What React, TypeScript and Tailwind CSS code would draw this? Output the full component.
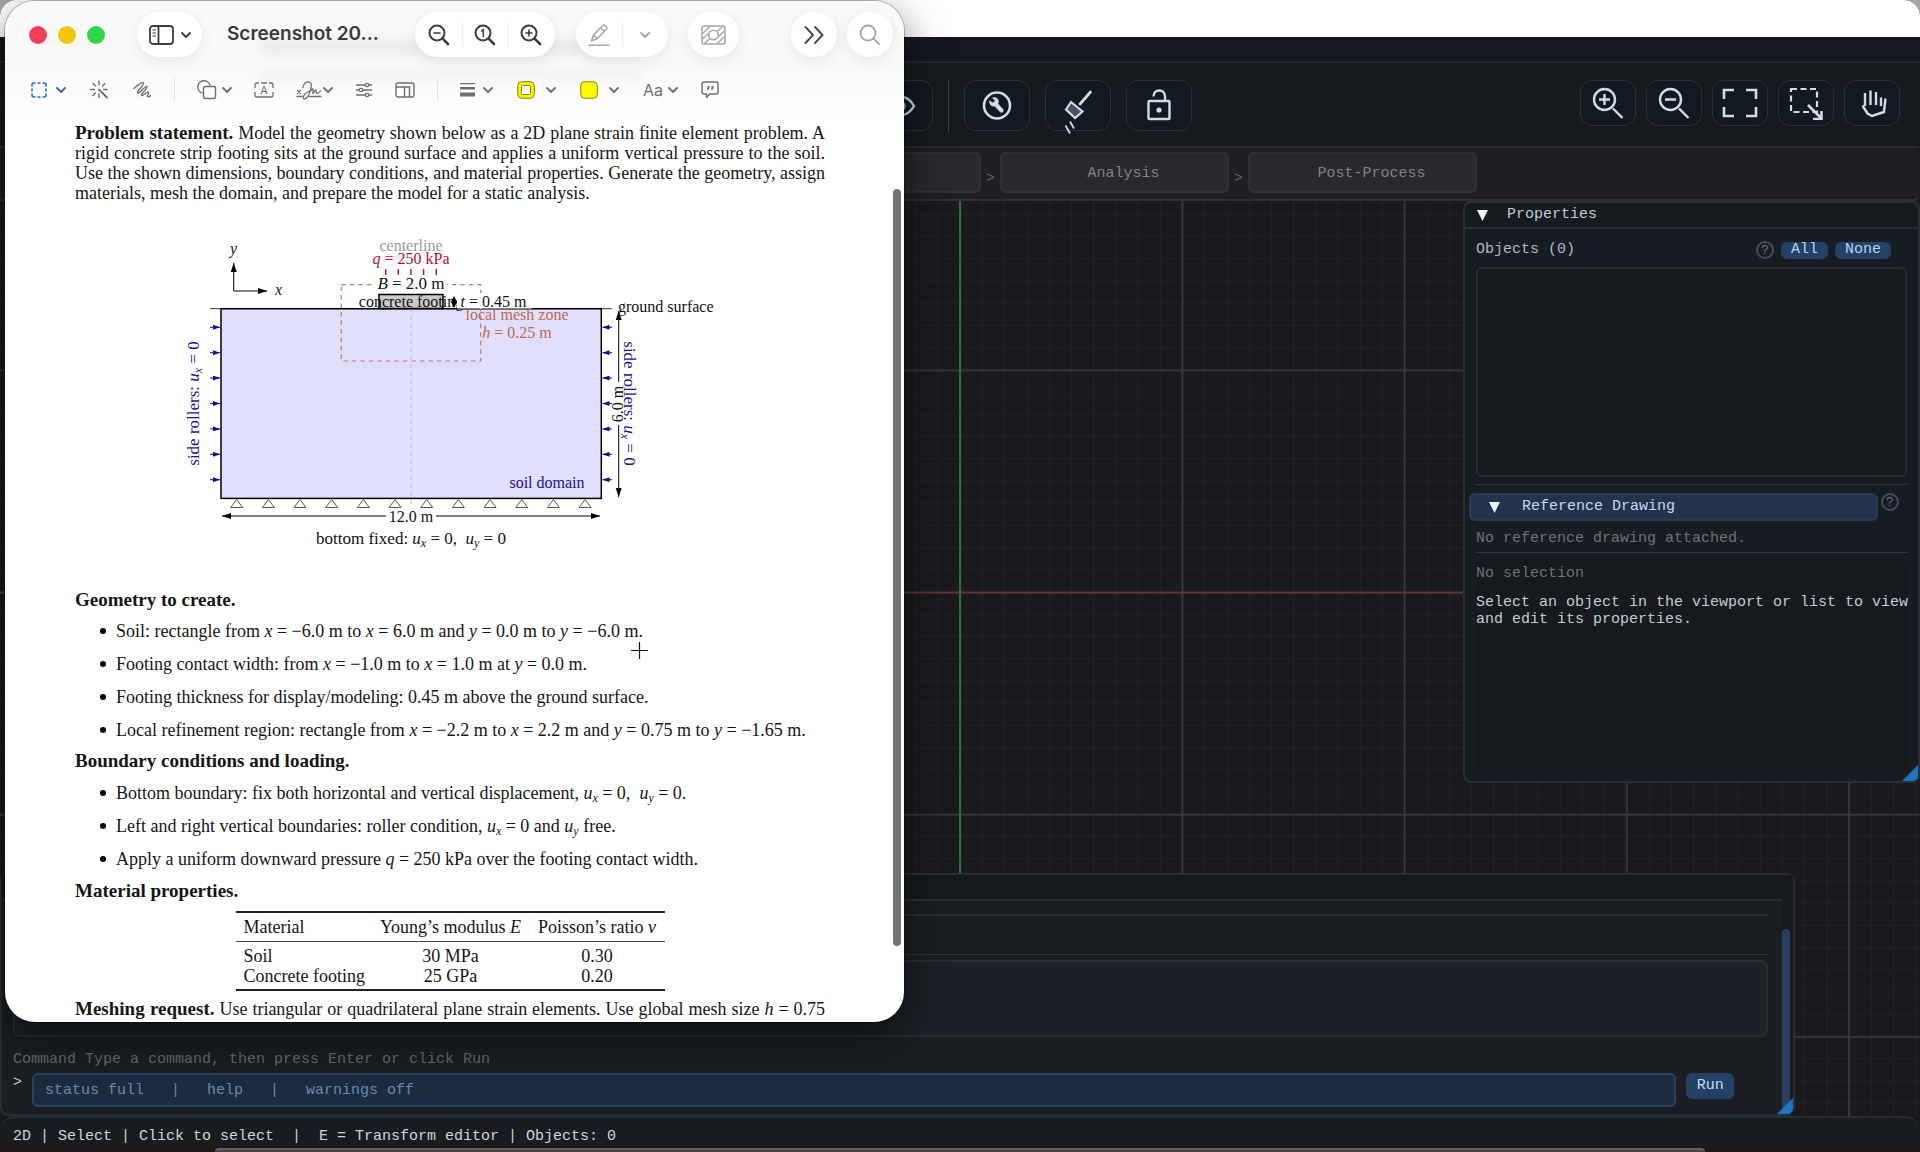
import type { ReactNode } from 'react';

const MONO = "font-['Liberation_Mono',monospace]";
const SERIF = "font-['Liberation_Serif',serif]";

const tabs = [
  { id: 'Mesh', label: '' },
  { id: 'Analysis', label: 'Analysis' },
  { id: 'Post-Process', label: 'Post-Process' },
];

/* ---------- dark application ---------- */

function ToolButton({ label, small, children }: { label: string; small?: boolean; children: ReactNode }) {
  return (
    <button
      type="button"
      aria-label={label}
      className={
        small
          ? 'flex h-[46px] w-14 items-center justify-center rounded-xl border border-[#2a3138] bg-[#131920] text-[#d3dbea]'
          : 'flex h-[51px] w-[66px] items-center justify-center rounded-xl border border-[#2a3138] bg-[#131920] text-[#d3dbea]'
      }
    >
      {children}
    </button>
  );
}

function Toolbar() {
  return (
    <div className="flex h-[85px] shrink-0 items-start justify-between border-b-2 border-[#252c33] bg-[#141a1e] pt-[17px] pr-5 pl-[867px]">
      <div className="flex items-start gap-[15px]">
        <ToolButton label="Visibility">
          <svg width="32" height="32" viewBox="0 0 32 32" fill="none" stroke="currentColor" strokeWidth="2.4">
            <path d="M2 16C6 9 11 6.500 16 6.500S26 9 30 16C26 23 21 25.500 16 25.500S6 23 2 16Z" />
            <circle cx="16" cy="16" r="4.500" fill="currentColor" />
          </svg>
        </ToolButton>
        <div className="h-[53px] w-px bg-[#3a4046]" />
        <ToolButton label="Settings">
          <svg width="32" height="32" viewBox="0 0 32 32" fill="none" stroke="currentColor">
            <ellipse cx="16" cy="15.500" rx="13" ry="13" strokeWidth="2.600" />
            <path d="M14 13.500L20.500 20.500" strokeWidth="4.200" strokeLinecap="round" />
            <path d="M11.500 7.800l3 3.200-2 2.400-3.800-2.600c-.6 3.600 1.800 6 5.400 5.200l3.200-3.200c.8-3.600-2-6.200-5.800-5Z" fill="currentColor" strokeWidth=".6" />
          </svg>
        </ToolButton>
        <ToolButton label="Clean">
          <svg className="overflow-visible" width="32" height="32" viewBox="0 0 32 32" fill="none" stroke="currentColor" strokeWidth="2">
            <path d="M28.500 2L18 14" strokeWidth="2.800" strokeLinecap="round" />
            <path d="M9 12L20.500 21.500L13 28L4 19.500Z" fill="#4b5263" strokeWidth="2.200" />
            <path d="M3.500 35.500l4.500 8M8 31.500l4 7" strokeWidth="1.800" />
          </svg>
        </ToolButton>
        <ToolButton label="Unlock">
          <svg className="mb-1" width="32" height="36" viewBox="0 0 32 36" fill="none" stroke="currentColor" strokeWidth="2.400">
            <rect x="5.500" y="15" width="21" height="18" rx="1" />
            <path d="M10.500 10.500C10.500 2.500 22 2.500 22 10.500V15" />
            <circle cx="16" cy="24" r="2.600" fill="currentColor" stroke="none" />
          </svg>
        </ToolButton>
      </div>
      <div className="flex gap-[10px]">
        <ToolButton small label="Zoom in">
          <svg width="32" height="32" viewBox="0 0 32 32" fill="none" stroke="currentColor" strokeWidth="2.400">
            <circle cx="12.500" cy="12.500" r="10.500" />
            <path d="M7 12.500h11M12.500 7v11M21 21.500L30.500 31" />
          </svg>
        </ToolButton>
        <ToolButton small label="Zoom out">
          <svg width="32" height="32" viewBox="0 0 32 32" fill="none" stroke="currentColor" strokeWidth="2.400">
            <circle cx="12.500" cy="12.500" r="10.500" />
            <path d="M7 12.500h11M21 21.500L30.500 31" />
          </svg>
        </ToolButton>
        <ToolButton small label="Fit view">
          <svg width="36" height="30" viewBox="0 0 36 30" fill="none" stroke="currentColor" strokeWidth="2.600">
            <path d="M2 11V2h10M24 2h10v9M34 19v9H24M12 28H2v-9" />
          </svg>
        </ToolButton>
        <ToolButton small label="Zoom to selection">
          <svg width="34" height="34" viewBox="0 0 34 34" fill="none" stroke="currentColor" strokeWidth="2.200">
            <rect x="2" y="3" width="26" height="23" strokeDasharray="6 3.500" />
            <path d="M19 19L32 32M32.500 25v8H24" strokeWidth="2.600" />
          </svg>
        </ToolButton>
        <ToolButton small label="Pan">
          <svg width="30" height="30" viewBox="0 0 30 30" fill="none" stroke="currentColor" strokeWidth="2.400">
            <path d="M8 18V5M13.500 17V2.500M19 17V4M24 18V9.500M5.500 17.500l5 8 4.500 2.500 12-4 1.500-13.500" />
          </svg>
        </ToolButton>
      </div>
    </div>
  );
}

function StageTabs() {
  return (
    <nav className="flex h-[53px] shrink-0 items-start rounded-r-md border-b-2 border-[#2a2f35] bg-[#1f1f23] pt-1 pl-[752px]">
      {tabs.map((tab, i) => (
        <div key={tab.id} className="flex items-start">
          {i > 0 && <span className="mt-[13px] w-[19px] text-center text-[15px] leading-7 text-[#5d6167]">&gt;</span>}
          <button
            type="button"
            aria-label={tab.id}
            className="h-[41px] w-[229px] rounded-md border-2 border-[#2d3238] bg-[#29282d] pt-[3px] pl-[18px] text-[15px] text-[#7f838a]"
          >
            {tab.label}
          </button>
        </div>
      ))}
    </nav>
  );
}

const CELL = 222.2;

function ViewportGrid() {
  return (
    <svg className="absolute inset-0 h-full w-full" aria-hidden="true">
      <defs>
        <pattern id="minor" x="959.7" y="390.6" width={CELL / 10} height={CELL / 10} patternUnits="userSpaceOnUse">
          <path d={`M.5 0V${CELL}M0 .5H${CELL}`} stroke="#212126" />
        </pattern>
        <pattern id="major" x="959.2" y="390.600" width={CELL} height={CELL} patternUnits="userSpaceOnUse">
          <path d={`M1 0V${CELL}M0 1H${CELL}`} stroke="#3c3c40" strokeWidth="1.500" />
        </pattern>
      </defs>
      <rect width="100%" height="100%" fill="#1a191d" />
      <rect width="100%" height="100%" fill="url(#minor)" />
      <rect width="100%" height="100%" fill="url(#major)" />
      <path d="M0 391.500H4000" stroke="#6d2f3b" strokeWidth="1.500" />
      <path d="M960 0V2000" stroke="#2b7036" strokeWidth="2" />
    </svg>
  );
}

function Triangle() {
  return (
    <svg width="11" height="11" viewBox="0 0 11 11" aria-hidden="true">
      <path d="M0 0H11L5.500 11Z" fill="#eef4fb" />
    </svg>
  );
}

function HelpMark() {
  return (
    <button
      type="button"
      className="flex h-[18px] w-[18px] items-center justify-center rounded-full border-2 border-[#454d5b] text-[13px] leading-none text-[#6d7889]"
    >
      ?
    </button>
  );
}

function ResizeCorner() {
  return (
    <svg className="absolute right-0 bottom-0" width="16" height="16" viewBox="0 0 16 16" aria-hidden="true">
      <path d="M16 0V10Q16 16 10 16H0Z" fill="#1f74c0" />
    </svg>
  );
}

function PropertiesPanel() {
  return (
    <section className="absolute top-0 right-0 flex h-[582px] w-[457px] flex-col rounded-lg border-2 border-[#262e36] bg-[#171c22] text-[15px] text-[#c3ccd4]">
      <header className="flex h-[26px] shrink-0 items-center gap-[19px] rounded-t-lg border-b-2 border-[#262e36] bg-[#141a1e] pt-px pl-3">
        <Triangle />
        <h2>Properties</h2>
      </header>
      <div className="flex flex-1 flex-col px-[11px] pt-3 pb-2">
        <div className="flex h-[18px] items-center pr-4">
          <span className="text-[#a9bac8]">Objects (0)</span>
          <div className="ml-auto flex items-center gap-[7px]">
            <HelpMark />
            <button type="button" className="h-[17px] w-[47px] rounded-md bg-[#234067] leading-4 text-[#b5d3f0]">
              All
            </button>
            <button type="button" className="h-[17px] w-14 rounded-md bg-[#234067] leading-4 text-[#b5d3f0]">
              None
            </button>
          </div>
        </div>
        <div className="mt-2 h-[210px] rounded-md border-2 border-[#272d33] bg-[#141a1d]" />
        <hr className="mt-[7px] border-[#33383e]" />
        <div className="-ml-[7px] mt-2 flex items-start gap-[3px]">
          <button
            type="button"
            className="flex h-7 w-[409px] items-center gap-[22px] rounded-md border-2 border-[#263c55] bg-[#22344d] pt-px pl-[18px] text-[#c5daed]"
          >
            <Triangle />
            Reference Drawing
          </button>
          <HelpMark />
        </div>
        <p className="mt-[9px] leading-[18px] text-[#6c7178]">No reference drawing attached.</p>
        <hr className="mt-1 border-[#33383e]" />
        <div className="mt-2 flex-1 bg-[#141a1d] pt-1">
          <p className="leading-[18px] text-[#6c7178]">No selection</p>
          <p className="mt-[11px] leading-[17px] whitespace-nowrap text-[#c3ccd4]">
            Select an object in the viewport or list to view
            <br />
            and edit its properties.
          </p>
        </div>
      </div>
      <ResizeCorner />
    </section>
  );
}

function ConsolePanel() {
  return (
    <section className="absolute bottom-0 left-0 flex h-[243px] w-[93.5%] rounded-lg border-2 border-[#262e36] bg-[#1a1e22] text-[15px]">
      <div className="flex flex-1 flex-col">
        <header className="h-[26px] border-b-2 border-[#2a3036] bg-[#141a1e]" />
        <div className="flex flex-1 flex-col pr-[14px] pl-[11px]">
          <hr className="mt-[13px] border-t-2 border-[#2a3036]" />
          <hr className="mt-[38px] border-[#30363d]" />
          <div className="mt-[5px] h-[77px] rounded-lg border-2 border-[#272d33] bg-[#1b2127]" />
          <label htmlFor="command" className="mt-[14px] leading-[18px] text-[#64696f]">
            Command Type a command, then press Enter or click Run
          </label>
          <div className="mt-1 flex items-start">
            <span className="w-[19px] leading-5 text-[#c3ccd4]">&gt;</span>
            <input
              id="command"
              type="text"
              defaultValue="status full   |   help   |   warnings off"
              className="h-[34px] flex-1 rounded-md border-2 border-[#294363] bg-[#1c2b3d] px-[11px] text-[#648cb5] outline-none"
            />
            <button type="button" className="mr-[34px] ml-[10px] h-[26px] w-12 rounded-md bg-[#234067] pt-px text-[#c5dcf3]">
              Run
            </button>
          </div>
        </div>
      </div>
      <div className="flex w-[11px] flex-col bg-[#141a1e] pt-[54px] pb-[3px]">
        <div className="w-2 flex-1 rounded-full bg-[#2a3f60]" />
      </div>
      <ResizeCorner />
    </section>
  );
}

function ModelerWindow() {
  return (
    <main className={`flex h-screen flex-col overflow-hidden rounded-t-2xl bg-[#1d171a] ${MONO}`}>
      <div className="h-[37px] shrink-0 bg-white" />
      <div className="h-[26px] shrink-0 border-b-2 border-[#21282f] bg-[#131820]" />
      <Toolbar />
      <StageTabs />
      <div className="relative flex-1">
        <ViewportGrid />
        <ConsolePanel />
        <PropertiesPanel />
      </div>
      <footer className="h-[30px] shrink-0 rounded-2xl border-t-2 border-[#262e36] bg-[#171c20] pt-[9px] pl-[13px] text-[15px] leading-[20px] whitespace-pre text-[#d0d6db]">
        {'2D | Select | Click to select  |  E = Transform editor | Objects: 0'}
      </footer>
      <div className="mx-[11.2%] mt-0.5 h-1 shrink-0 rounded-t-lg border-t-2 border-[#6b6064] bg-[#4a4145]" />
    </main>
  );
}

/* ---------- document window ---------- */

function Chevron({ className }: { className?: string }) {
  return (
    <svg className={className} width="10" height="10" viewBox="0 0 10 10" fill="none" stroke="currentColor" strokeWidth="1.800" aria-hidden="true">
      <path d="M1 3L5 7L9 3" strokeLinecap="round" strokeLinejoin="round" />
    </svg>
  );
}

function Lens({ mark, light }: { mark?: ReactNode; light?: boolean }) {
  return (
    <svg width="22" height="22" viewBox="0 0 22 22" fill="none" stroke={light ? '#a6a6a6' : '#3c3c3c'} strokeWidth={light ? 1.8 : 2} strokeLinecap="round">
      <circle cx="9" cy="9" r="7.500" />
      <path d="M14.600 14.600L20 20" strokeWidth={light ? 1.8 : 2.6} />
      {mark}
    </svg>
  );
}

const pill = 'flex h-[45px] items-center rounded-full bg-white shadow-[0_4px_16px_rgba(0,0,0,0.08)]';

function TitleRow() {
  return (
    <div className="relative flex items-center pt-[11px] pr-[11px] pl-6">
      <div className="flex gap-[11px]">
        <button type="button" aria-label="Close" className="h-[18px] w-[18px] rounded-full bg-[#f43f58]" />
        <button type="button" aria-label="Minimize" className="h-[18px] w-[18px] rounded-full bg-[#f2c40c]" />
        <button type="button" aria-label="Zoom" className="h-[18px] w-[18px] rounded-full bg-[#30d54c]" />
      </div>
      <button type="button" aria-label="Sidebar" className={`${pill} ml-[32px] w-[65px] justify-center gap-[7px] text-[#3c3c3c]`}>
        <svg width="25" height="20" viewBox="0 0 25 20" fill="none" stroke="currentColor" strokeWidth="1.800">
          <rect x="1" y="1" width="23" height="18" rx="3" />
          <path d="M9.500 1v18" />
          <path d="M3.500 5h3.500M3.500 8h3.500M3.500 11h3.500" strokeWidth="1.200" />
        </svg>
        <Chevron />
      </button>
      <h1 className="ml-[25px] w-[161px] text-[19px] font-semibold whitespace-nowrap text-[#3a3a3a]">Screenshot 20...</h1>
      <div className={`${pill} ml-[27px] w-[140px] px-[2px]`}>
        <button type="button" aria-label="Zoom out" className="flex h-6 flex-1 items-center justify-center">
          <Lens mark={<path d="M6 9h6" strokeWidth="1.600" />} />
        </button>
        <button type="button" aria-label="Actual size" className="flex h-6 flex-1 items-center justify-center border-x border-[#ececec]">
          <Lens mark={<path d="M7.500 7L9.300 5.500V12.500" strokeWidth="1.500" />} />
        </button>
        <button type="button" aria-label="Zoom in" className="flex h-6 flex-1 items-center justify-center">
          <Lens mark={<path d="M6 9h6M9 6v6" strokeWidth="1.600" />} />
        </button>
      </div>
      <div className={`${pill} ml-[21px] w-[92px] text-[#a6a6a6]`}>
        <button type="button" aria-label="Markup" className="flex h-6 flex-1 items-center justify-center border-r border-[#ececec]">
          <svg width="22" height="22" viewBox="0 0 22 22" fill="none" stroke="currentColor" strokeWidth="1.500" strokeLinejoin="round">
            <path d="M3.500 17L5.500 11L14.500 1.500Q16 .3 17.700 1.800T18.500 5L9.500 14.500ZM12.500 3.700l4 3.600M5.500 11l4 3.500" />
            <path d="M.5 21.200h21" strokeWidth="1.600" />
          </svg>
        </button>
        <button type="button" aria-label="Markup options" className="flex h-6 flex-1 items-center justify-center">
          <Chevron />
        </button>
      </div>
      <button type="button" aria-label="Mask" className={`${pill} ml-5 w-[51px] justify-center text-[#a6a6a6]`}>
        <svg width="25" height="20" viewBox="0 0 25 20" fill="none" stroke="currentColor" strokeWidth="1.500">
          <rect x="1" y="1" width="23" height="18" rx="2" />
          <circle cx="12.500" cy="10" r="4.800" />
          <path d="M1.500 8.500L9 1.500M1.500 14L7.500 8.500M3.500 18.500L9 13.500M16.500 6L22 1.500M17.500 11.500L23.500 6M16 18.500l7.500-6.500" />
        </svg>
      </button>
      <button type="button" aria-label="More" className={`${pill} ml-auto w-[46px] justify-center text-[#4a4a4a]`}>
        <svg width="20" height="18" viewBox="0 0 20 18" fill="none" stroke="currentColor" strokeWidth="1.900" strokeLinecap="round" strokeLinejoin="round">
          <path d="M1.500 1L9 9L1.500 17M11 1L18.500 9L11 17" />
        </svg>
      </button>
      <button type="button" aria-label="Search" className={`${pill} ml-[10px] w-[46px] justify-center`}>
        <Lens light />
      </button>
    </div>
  );
}

function MarkupRow() {
  return (
    <div className="relative mt-[23px] flex h-5 items-center gap-[22px] pl-[26px] text-[#6e6e6e]">
      <div className="flex items-center gap-[23px]">
        <button type="button" aria-label="Selection" className="flex items-center gap-[9px] text-[#2767c9]">
          <svg width="16" height="16" viewBox="0 0 16 16" fill="none" stroke="currentColor" strokeWidth="1.600">
            <path d="M1 4.500V3Q1 1 3 1h1.500M6.500 1h3M11.500 1H13q2 0 2 2v1.500M15 6.500v3M15 11.500V13q0 2-2 2h-1.500M9.500 15h-3M4.500 15H3q-2 0-2-2v-1.500M1 9.500v-3" />
          </svg>
          <Chevron />
        </button>
        <button type="button" aria-label="Instant alpha">
          <svg width="20" height="20" viewBox="0 0 20 20" fill="none" stroke="currentColor" strokeWidth="1.400" strokeLinecap="round">
            <path d="M10 9.500L18 17.500" strokeWidth="1.800" />
            <path d="M10 1v3.500M10 14v3.500M1.500 9.500H5.500M14.500 9.500H18M4 3.500L6.500 6M16 3.500L13.500 6M4 15.500L6.500 13" />
          </svg>
        </button>
        <button type="button" aria-label="Sketch">
          <svg width="20" height="20" viewBox="0 0 20 20" fill="none" stroke="currentColor" strokeWidth="1.400" strokeLinecap="round">
            <path d="M2 8.500C6 5 10 1.500 11.500 3S4 11.500 5.500 13 13.500 5 15 6.500 8 14 9.500 15.500s5.500-5 7-3.500-2.500 3.500-1 4.500 2.500-.5 3-1" />
          </svg>
        </button>
      </div>
      <div className="h-6 w-px bg-[#e2e2e2]" />
      <div className="flex items-center gap-[22px]">
        <button type="button" aria-label="Shapes" className="flex items-center gap-[5px]">
          <svg width="20" height="20" viewBox="0 0 20 20" fill="none" stroke="currentColor" strokeWidth="1.400">
            <path d="M5.500 13A6.200 6.200 0 1 1 13 5.500" />
            <rect x="6.500" y="6.500" width="12" height="12" rx="2" />
          </svg>
          <Chevron />
        </button>
        <button type="button" aria-label="Text">
          <svg width="20" height="16" viewBox="0 0 20 16" fill="none" stroke="currentColor" strokeWidth="1.300">
            <path d="M1 6V3Q1 1 3 1h2M7 1h6M15 1h2q2 0 2 2v3M19 10v3q0 2-2 2H3q-2 0-2-2v-3M7 15h6" />
            <text x="10" y="12" textAnchor="middle" fontSize="11" fontFamily="Inter, sans-serif" fill="currentColor" stroke="none">A</text>
          </svg>
        </button>
        <button type="button" aria-label="Sign" className="flex items-center gap-px">
          <svg width="26" height="20" viewBox="0 0 26 20" fill="none" stroke="currentColor" strokeWidth="1.300" strokeLinecap="round">
            <path d="M1 16.500h5M13 16.500h12M1.500 10.500l3 3M4.500 10.500l-3 3" />
            <path d="M7 7.500C7 3 11 .8 14 2.500S14 14 11 17.500 6 18 8.500 14.500 14 12 16 9.500 16.500 13 17 13.500 19 9.500 20 10 19.500 13.500 21 13.500 23.500 12 24.500 11" />
          </svg>
          <Chevron />
        </button>
        <button type="button" aria-label="Adjust color">
          <svg width="18" height="16" viewBox="0 0 18 16" fill="none" stroke="currentColor" strokeWidth="1.300">
            <path d="M1 3h9M14 3h3M1 8h3M8 8h9M1 13h9M14 13h3" />
            <circle cx="12" cy="3" r="1.700" />
            <circle cx="6" cy="8" r="1.700" />
            <circle cx="12" cy="13" r="1.700" />
          </svg>
        </button>
        <button type="button" aria-label="Resize">
          <svg width="20" height="16" viewBox="0 0 20 16" fill="none" stroke="currentColor" strokeWidth="1.400">
            <rect x="1" y="1" width="18" height="14" rx="2" />
            <path d="M1 5h13.500v10M9.500 5v10" />
          </svg>
        </button>
      </div>
      <div className="h-6 w-px bg-[#e2e2e2]" />
      <div className="flex items-center gap-6">
        <button type="button" aria-label="Line style" className="flex items-center gap-2">
          <svg width="15" height="14" viewBox="0 0 14 14" preserveAspectRatio="none" fill="currentColor">
            <path d="M0 0h14v1.200H0zM0 4h14v2.500H0zM0 9.500h14v4H0z" />
          </svg>
          <Chevron />
        </button>
        <button type="button" aria-label="Border color" className="flex items-center gap-[11px]">
          <svg width="18" height="18" viewBox="0 0 18 18" fill="#f8f000" stroke="#8a8714">
            <rect x=".7" y=".7" width="16.600" height="16.600" rx="4" />
            <rect x="4.500" y="4.500" width="9" height="9" rx="1" fill="#fff" />
          </svg>
          <Chevron />
        </button>
        <button type="button" aria-label="Fill color" className="flex items-center gap-[11px]">
          <svg width="18" height="18" viewBox="0 0 18 18" fill="#fcfb00" stroke="#8a8714">
            <rect x=".7" y=".7" width="16.600" height="16.600" rx="4" />
          </svg>
          <Chevron />
        </button>
        <button type="button" aria-label="Text style" className="flex w-[34px] items-center gap-[5px] text-base leading-none">
          Aa
          <Chevron className="shrink-0" />
        </button>
        <button type="button" aria-label="Notes">
          <svg width="18" height="18" viewBox="0 0 18 18" fill="none" stroke="currentColor" strokeWidth="1.400">
            <path d="M3 1h12q2 0 2 2v8q0 2-2 2H8.500L5.500 16.500V13H3q-2 0-2-2V3q0-2 2-2Z" strokeLinejoin="round" />
            <path d="M7.500 5v1.500q0 1.500-1.200 2M11.500 5v1.500q0 1.500-1.200 2" strokeWidth="2" />
          </svg>
        </button>
      </div>
    </div>
  );
}

const rollers = [327.3, 352.7, 378.1, 403.5, 428.9, 454.3, 479.7];
const supports = Array.from({ length: 12 }, (_, i) => 236.7 + i * 31.67);

function Disp({ axis }: { axis: string }) {
  return (
    <>
      <tspan fontStyle="italic">u</tspan>
      <tspan fontStyle="italic" fontSize="12" dy="3">{axis}</tspan>
      <tspan dy="-3"> = 0</tspan>
    </>
  );
}

function FootingDiagram() {
  return (
    <svg className="block w-full overflow-visible" viewBox="75 203 750 387" fontSize="16" fill="#111" role="img" aria-label="Strip footing on soil">
      <defs>
        <marker id="tip" viewBox="0 0 9 6" refX="9" refY="3" markerWidth="9" markerHeight="7" markerUnits="userSpaceOnUse" orient="auto-start-reverse">
          <path d="M0 0L9 3L0 6Z" fill="#000" />
        </marker>
        <marker id="blueTip" viewBox="0 0 7 5" refX="7" refY="2.500" markerWidth="8" markerHeight="5" markerUnits="userSpaceOnUse" orient="auto">
          <path d="M0 0L7 2.500L0 5Z" fill="#150a8c" />
        </marker>
      </defs>

      <rect x="221" y="308.700" width="380.300" height="189.700" fill="#e0dffd" stroke="#000" strokeWidth="1.500" />
      <path d="M210 308.700H612" stroke="#000" strokeWidth=".8" />
      <path d="M411 308V504" stroke="#b9b9d2" strokeWidth="1" strokeDasharray="4 4" />

      <g fill="none" stroke="#000" strokeWidth="1">
        <path d="M233.700 291V263" markerEnd="url(#tip)" />
        <path d="M233.700 291H267" markerEnd="url(#tip)" />
      </g>
      <text x="233.500" y="254" textAnchor="middle" fontStyle="italic">y</text>
      <text x="278.500" y="295" textAnchor="middle" fontStyle="italic">x</text>

      {/* refinement box */}
      <rect x="341.300" y="284.700" width="139.400" height="76.300" fill="none" stroke="#c9795f" strokeWidth="1.200" strokeDasharray="4.500 4" />

      <text x="411" y="250.500" textAnchor="middle" fill="#999">centerline</text>
      <text x="411" y="264" textAnchor="middle" fill="#ae1230">
        <tspan fontStyle="italic">q</tspan> = 250 kPa
      </text>
      <path d="M385.700 269v6M398.300 269v6M411 269v6M423.600 269v6M436.300 269v6" stroke="#ae1230" strokeWidth="1.400" />

      <rect x="374" y="275.500" width="73" height="15" fill="#fff" />
      <text x="411" y="288.500" textAnchor="middle" fontSize="17">
        <tspan fontStyle="italic">B</tspan> = 2.0 m
      </text>

      <rect x="379" y="294.500" width="64" height="14" fill="#cbcbcb" stroke="#000" strokeWidth="1.500" />
      <text x="411" y="306.500" textAnchor="middle">concrete footing</text>
      <rect x="457" y="293" width="75" height="15.500" fill="#fff" />
      <path d="M454 296l3 6-3 6-3-6Z" fill="#000" />
      <text x="460.500" y="307">
        <tspan fontStyle="italic">t</tspan> = 0.45 m
      </text>

      <g fill="#c2664f" textAnchor="middle">
        <text x="517" y="320">local mesh zone</text>
        <text x="517" y="337.500">
          <tspan fontStyle="italic">h</tspan> = 0.25 m
        </text>
      </g>

      {rollers.map((y) => (
        <g key={y} stroke="#150a8c" strokeWidth="1">
          <path d={`M210 ${y}H220`} markerEnd="url(#blueTip)" />
          <path d={`M612 ${y}H602.500`} markerEnd="url(#blueTip)" />
        </g>
      ))}
      <g fill="#1d108e" textAnchor="middle">
        <text transform="translate(198.500 403.500) rotate(-90)" fontSize="17">
          side rollers: <Disp axis="x" />
        </text>
        <text transform="translate(624 403.500) rotate(90)" fontSize="17">
          side rollers: <Disp axis="x" />
        </text>
        <text x="547" y="487.500">soil domain</text>
      </g>

      <g stroke="#000" strokeWidth="1">
        <path d="M618.700 382V311" markerEnd="url(#tip)" />
        <path d="M618.700 425V497" markerEnd="url(#tip)" />
        <path d="M386 516H222" markerEnd="url(#tip)" />
        <path d="M436 516H600" markerEnd="url(#tip)" />
      </g>
      <text transform="translate(623 404) rotate(-90)" textAnchor="middle">6.0 m</text>
      <text x="618" y="311.500">ground surface</text>

      {supports.map((x) => (
        <path key={x} d={`M${x} 499.500L${x + 6} 507.500H${x - 6}Z`} fill="none" stroke="#555" strokeWidth="1" />
      ))}
      <text x="411" y="521.500" textAnchor="middle">12.0 m</text>
      <text x="411" y="544" textAnchor="middle" fontSize="17">
        bottom fixed: <Disp axis="x" />, &nbsp;<Disp axis="y" />
      </text>
    </svg>
  );
}

function U({ axis }: { axis: string }) {
  return (
    <i>
      u<sub className="text-xs leading-none">{axis}</sub>
    </i>
  );
}

function Bullets({ items }: { items: ReactNode[] }) {
  return (
    <ul className="flex flex-col gap-[13px]">
      {items.map((item, i) => (
        <li key={i} className="flex h-5 items-center pl-[25px] whitespace-nowrap">
          <span className="mr-[10px] h-[6px] w-[6px] rounded-full bg-black" />
          <span>{item}</span>
        </li>
      ))}
    </ul>
  );
}

function ProblemPage() {
  return (
    <article className={`pr-[79px] pl-[70px] text-[18px] leading-5 text-[#151515] ${SERIF}`}>
      <p>
        <span className="block h-5 [text-align-last:justify]">
          <b className="text-[19px] leading-none">Problem statement.</b> Model the geometry shown below as a 2D plane strain finite element problem. A
        </span>
        <span className="block h-5 [text-align-last:justify]">
          rigid concrete strip footing sits at the ground surface and applies a uniform vertical pressure to the soil.
        </span>
        <span className="block h-5 [text-align-last:justify]">
          Use the shown dimensions, boundary conditions, and material properties. Generate the geometry, assign
        </span>
        <span className="block h-5">materials, mesh the domain, and prepare the model for a static analysis.</span>
      </p>

      <FootingDiagram />

      <h3 className="mb-[11px] text-[19px] leading-5 font-bold">Geometry to create.</h3>
      <Bullets
        items={[
          <>Soil: rectangle from <i>x</i> = −6.0 m to <i>x</i> = 6.0 m and <i>y</i> = 0.0 m to <i>y</i> = −6.0 m.</>,
          <>Footing contact width: from <i>x</i> = −1.0 m to <i>x</i> = 1.0 m at <i>y</i> = 0.0 m.</>,
          <>Footing thickness for display/modeling: 0.45 m above the ground surface.</>,
          <>Local refinement region: rectangle from <i>x</i> = −2.2 m to <i>x</i> = 2.2 m and <i>y</i> = 0.75 m to <i>y</i> = −1.65 m.</>,
        ]}
      />
      <h3 className="mt-[11px] mb-3 text-[19px] leading-5 font-bold">Boundary conditions and loading.</h3>
      <Bullets
        items={[
          <>Bottom boundary: fix both horizontal and vertical displacement, <U axis="x" /> = 0,&nbsp; <U axis="y" /> = 0.</>,
          <>Left and right vertical boundaries: roller condition, <U axis="x" /> = 0 and <U axis="y" /> free.</>,
          <>Apply a uniform downward pressure <i>q</i> = 250 kPa over the footing contact width.</>,
        ]}
      />
      <h3 className="mt-3 mb-[10px] text-[19px] leading-5 font-bold">Material properties.</h3>
      <table className="mx-auto w-[429px] table-fixed border-y-2 border-[#222]">
        <thead>
          <tr className="h-[29px] border-b border-[#444] whitespace-nowrap">
            <th className="w-[136px] pl-2 text-left font-normal">Material</th>
            <th className="w-[158px] font-normal">Young’s modulus <i>E</i></th>
            <th className="font-normal">Poisson’s ratio <i>ν</i></th>
          </tr>
        </thead>
        <tbody className="text-center whitespace-nowrap">
          <tr>
            <td className="pt-1 pl-2 text-left">Soil</td>
            <td className="pt-1">30 MPa</td>
            <td className="pt-1">0.30</td>
          </tr>
          <tr>
            <td className="pb-[3px] pl-2 text-left">Concrete footing</td>
            <td className="pb-[3px]">25 GPa</td>
            <td className="pb-[3px]">0.20</td>
          </tr>
        </tbody>
      </table>
      <p className="mt-2 [text-align-last:justify]">
        <b className="text-[19px] leading-none">Meshing request.</b> Use triangular or quadrilateral plane strain elements. Use global mesh size <i>h</i> = 0.75
      </p>
    </article>
  );
}

function DocumentWindow() {
  return (
    <section className="absolute top-px left-[5px] h-[1021px] w-[899px] overflow-hidden rounded-[30px] bg-white shadow-[0_0_0_1px_rgba(0,0,0,0.25),0_16px_44px_rgba(0,0,0,0.55)]">
      <div className="relative bg-gradient-to-b from-[#fafafa] via-[#f9f9f9] to-white pb-[23px] font-['Inter',sans-serif]">
        {/* page heading scrolled under the frosted toolbar */}
        <div className="absolute top-[40px] left-[255px] h-3 w-[380px] rounded bg-[#e9e9e9] blur-[6px]" />
        <div className="absolute top-[70px] left-[255px] h-2 w-[382px] rounded bg-[#efefef] blur-[4px]" />
        <TitleRow />
        <MarkupRow />
      </div>
      <ProblemPage />
      <div className="absolute top-[188px] right-[3px] h-[757px] w-2 rounded-full bg-[#757575]" />
      {/* crosshair pointer */}
      <svg className="absolute top-[641px] left-[626px]" width="17" height="17" viewBox="0 0 17 17" stroke="#111" strokeWidth="1.200">
        <path d="M8.500 0V17M0 8.500H17" />
      </svg>
    </section>
  );
}

export default function App() {
  return (
    <div className="relative min-h-screen overflow-hidden bg-[#a5a5a5]">
      <ModelerWindow />
      <DocumentWindow />
    </div>
  );
}
